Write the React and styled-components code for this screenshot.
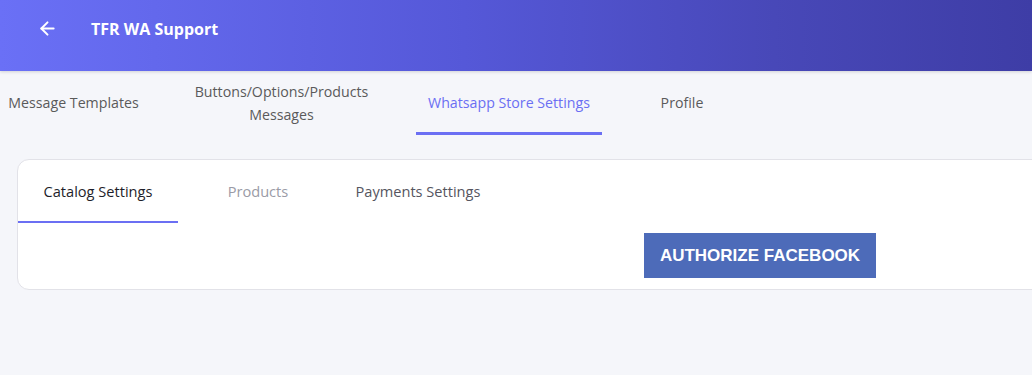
import React, { useState } from "react";
import styled, { createGlobalStyle } from "styled-components";
import { ArrowLeft } from "lucide-react";

const mainTabs = [
  { id: "templates", label: "Message Templates", width: 147 },
  { id: "buttons", label: "Buttons/Options/Products Messages", width: 269 },
  { id: "store", label: "Whatsapp Store Settings", width: 186 },
  { id: "profile", label: "Profile", width: 160 },
];

const subTabs = [
  { id: "catalog", label: "Catalog Settings" },
  { id: "products", label: "Products", muted: true },
  { id: "payments", label: "Payments Settings" },
];

const App = () => {
  const [tab, setTab] = useState("store");
  const [subTab, setSubTab] = useState("catalog");

  return (
    <>
      <GlobalStyle />
      <Page>
        <Header>
          <BackButton aria-label="Back">
            <ArrowLeft size={21} strokeWidth={2.3} />
          </BackButton>
          <Title>TFR WA Support</Title>
        </Header>

        <TabBar>
          {mainTabs.map(t => (
            <MainTab
              key={t.id}
              $width={t.width}
              $active={tab === t.id}
              onClick={() => setTab(t.id)}
            >
              <TabLabel>{t.label}</TabLabel>
            </MainTab>
          ))}
        </TabBar>

        <Card>
          <SubTabBar>
            {subTabs.map(t => (
              <SubTab
                key={t.id}
                $active={subTab === t.id}
                $muted={t.muted}
                onClick={() => setSubTab(t.id)}
              >
                {t.label}
              </SubTab>
            ))}
          </SubTabBar>
          <CardBody>
            <FacebookButton>AUTHORIZE FACEBOOK</FacebookButton>
          </CardBody>
        </Card>
      </Page>
    </>
  );
};

const GlobalStyle = createGlobalStyle`
  body {
    margin: 0;
    background: #f5f6fa;
    font-family: "Open Sans", "Liberation Sans", sans-serif;
    overflow: hidden;
  }
`;

const Page = styled.div`
  width: 1032px;
  min-height: 375px;
  background: #f5f6fa;
`;

const Header = styled.header`
  height: 71px;
  display: flex;
  align-items: center;
  padding-left: 37px;
  padding-bottom: 14px;
  box-sizing: border-box;
  background: linear-gradient(90deg, #6a70f6 0%, #5558d8 45%, #4848b8 75%, #3e3da6 100%);
  box-shadow: 0 1px 3px rgba(0, 0, 0, 0.15);
`;

const BackButton = styled.button`
  display: flex;
  align-items: center;
  padding: 0;
  border: none;
  background: transparent;
  color: #fff;
  cursor: pointer;
`;

const Title = styled.h1`
  margin: 0 0 0 33px;
  font-size: 16px;
  font-weight: 700;
  color: #fff;
`;

const TabBar = styled.nav`
  display: flex;
  height: 64px;
`;

const MainTab = styled.button`
  width: ${p => p.$width}px;
  flex: none;
  display: flex;
  align-items: center;
  justify-content: center;
  padding: 2px 0 0;
  border: none;
  border-bottom: 3px solid ${p => (p.$active ? "#6b6ff3" : "transparent")};
  background: transparent;
  font-family: inherit;
  font-size: 14.2px;
  line-height: 23px;
  color: ${p => (p.$active ? "#6b6ff3" : "#5a5a5a")};
  cursor: pointer;
`;

const TabLabel = styled.span`
  max-width: 195px;
  text-align: center;
`;

const Card = styled.section`
  width: 1484px;
  margin: 24px 0 0 17px;
  background: #fff;
  border: 1px solid #e2e2e8;
  border-radius: 12px;
`;

const SubTabBar = styled.div`
  display: flex;
  height: 63px;
`;

const SubTab = styled.button`
  width: 160px;
  display: flex;
  align-items: center;
  justify-content: center;
  padding: 0;
  border: none;
  border-bottom: 2px solid ${p => (p.$active ? "#6b6ff3" : "transparent")};
  background: transparent;
  font-family: inherit;
  font-size: 14.6px;
  color: ${p => (p.$active ? "#1e1e2a" : p.$muted ? "#9a9ba6" : "#555560")};
  cursor: pointer;
`;

const CardBody = styled.div`
  display: flex;
  justify-content: center;
  padding: 10px 0 11px;
`;

const FacebookButton = styled.button`
  height: 45px;
  padding: 0 16px;
  border: none;
  background: #4d6bb9;
  color: #fff;
  font-family: "Liberation Sans", Arial, sans-serif;
  font-size: 17px;
  font-weight: 700;
  cursor: pointer;
`;

export default App;
